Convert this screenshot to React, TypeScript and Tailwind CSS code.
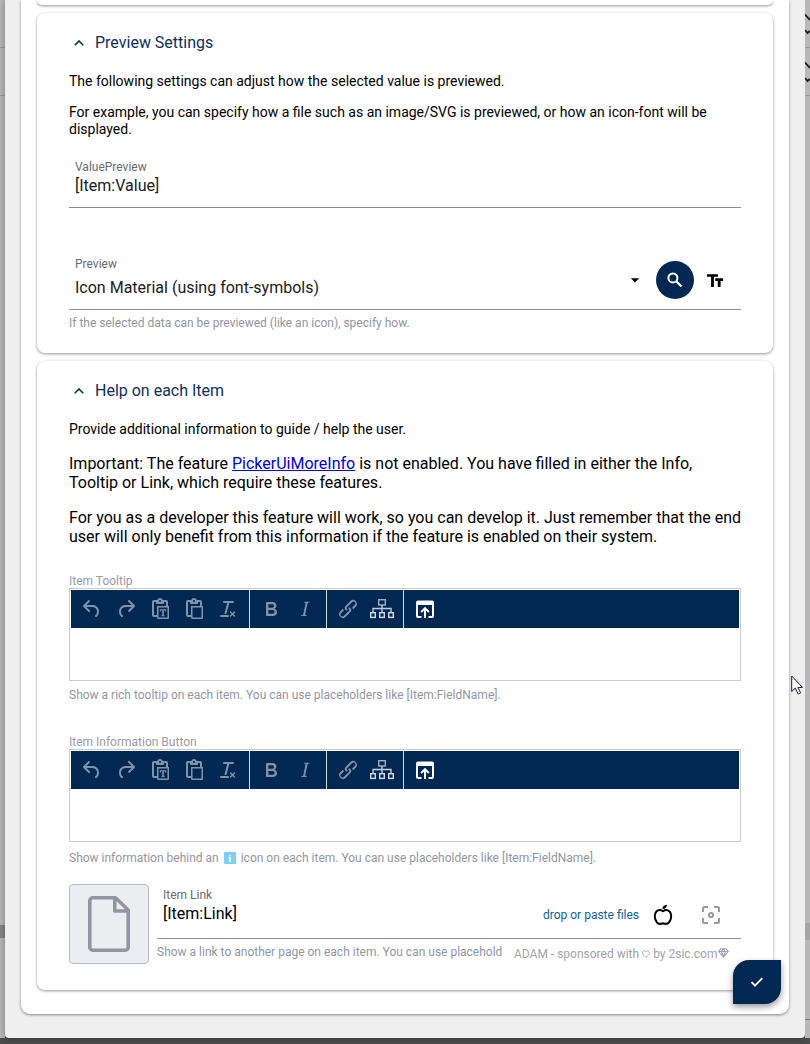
import type { ReactNode } from "react";
import { MdArrowDropDown } from "react-icons/md";

const PASTE =
  "M18 9V5h-2v1c0 .6-.4 1-1 1H9a1 1 0 0 1-1-1V5H6v13h3V9h9ZM9 20H6a2 2 0 0 1-2-2V5c0-1.1.9-2 2-2h3.2A3 3 0 0 1 12 1a3 3 0 0 1 2.8 2H18a2 2 0 0 1 2 2v4h1v12.1c0 .5-.4.9-.9.9h-10a.9.9 0 0 1-.9-.9L9 20Zm1.5-9.5v10h9v-10h-9ZM12 3a1 1 0 0 0-1 1c0 .5.4 1 1 1s1-.5 1-1-.4-1-1-1Z";

const ICONS = {
  undo: "M6.4 8H12c3.7 0 6.2 2 6.8 5.1.6 2.7-.4 5.6-2.3 6.8a1 1 0 0 1-1-1.8c1.1-.6 1.8-2.7 1.4-4.6-.5-2.1-2.1-3.5-4.9-3.5H6.4l3.3 3.3a1 1 0 1 1-1.4 1.4l-5-5a1 1 0 0 1 0-1.4l5-5a1 1 0 0 1 1.4 1.4L6.4 8Z",
  redo: "M17.6 10H12c-2.8 0-4.4 1.4-4.9 3.5-.4 2 .3 4 1.4 4.6a1 1 0 1 1-1 1.8c-2-1.2-2.9-4.1-2.3-6.8.6-3 3-5.1 6.8-5.1h5.6l-3.3-3.3a1 1 0 1 1 1.4-1.4l5 5a1 1 0 0 1 0 1.4l-5 5a1 1 0 0 1-1.4-1.4l3.3-3.3Z",
  pasteText: PASTE + "M11.8 12.2h6.4v2.2h-1l-.3-1.1h-1.1v5l1 .2v.8h-3.6v-.8l1-.2v-5h-1.1l-.3 1.1h-1v-2.2Z",
  paste: PASTE,
  clear: "M13.2 6a1 1 0 0 1 0 .2l-2.6 10a1 1 0 0 1-1 .8h-.2a.8.8 0 0 1-.8-1l2.6-10H8a1 1 0 1 1 0-2h9a1 1 0 0 1 0 2h-3.8ZM5 18h7a1 1 0 0 1 0 2H5a1 1 0 0 1 0-2Zm13 1.5L16.5 18 15 19.5a.7.7 0 0 1-1-1l1.5-1.5-1.5-1.5a.7.7 0 0 1 1-1l1.5 1.5 1.5-1.5a.7.7 0 0 1 1 1L17.5 17l1.5 1.5a.7.7 0 0 1-1 1Z",
  bold: "M7.8 19c-.3 0-.5 0-.6-.2l-.2-.5V5.7c0-.2 0-.4.2-.5l.6-.2h5c1.5 0 2.7.3 3.5 1 .7.6 1.1 1.4 1.1 2.5a3 3 0 0 1-.6 1.9c-.4.6-1 1-1.6 1.2.4.1.9.3 1.3.6s.8.7 1 1.2c.4.4.5 1 .5 1.6 0 1.3-.4 2.3-1.3 3-.8.7-2.1 1-3.8 1H7.8Zm5-8.3c.6 0 1.2-.1 1.6-.5.4-.3.6-.7.6-1.3 0-1.1-.8-1.7-2.3-1.7H9.3v3.5h3.4Zm.5 6c.7 0 1.3-.1 1.7-.4.4-.4.6-.9.6-1.5s-.2-1-.7-1.4c-.4-.3-1-.4-2-.4H9.4v3.8h4Z",
  italic: "m16.7 4.7-.1.9h-.3c-.6 0-1 0-1.4.3-.3.3-.4.6-.5 1.1l-2.1 9.8v.6c0 .5.4.8 1.4.8h.2l-.2.8H8l.2-.8h.2c1.1 0 1.8-.5 2-1.5l2-9.8.1-.5c0-.6-.4-.8-1.4-.8h-.3l.2-.9h5.8Z",
  link: "M6.2 12.3a1 1 0 0 1 1.4 1.4l-2 2a2 2 0 1 0 2.6 2.8l4.8-4.8a1 1 0 0 0 0-1.4 1 1 0 1 1 1.4-1.3 2.9 2.9 0 0 1 0 4L9.6 20a3.9 3.9 0 0 1-5.5-5.5l2-2Zm11.6-.6a1 1 0 0 1-1.4-1.4l2-2a2 2 0 1 0-2.6-2.8L11 10.3a1 1 0 0 0 0 1.4A1 1 0 1 1 9.6 13a2.9 2.9 0 0 1 0-4L14.4 4a3.9 3.9 0 0 1 5.5 5.5l-2 2Z",
};

function Tool({ name }: { name: keyof typeof ICONS }) {
  return (
    <button className="flex h-[38px] w-[34px] items-center justify-center text-[#8093a9]">
      <svg width="24" height="24" viewBox="0 0 24 24" fill="currentColor" fillRule="evenodd">
        <path d={ICONS[name]} />
      </svg>
    </button>
  );
}

function Group({ children }: { children: ReactNode }) {
  return <div className="box-content flex border-r border-[#d5dbe2] px-1">{children}</div>;
}

function Editor() {
  return (
    <div className="h-[93px] border border-[#cccccc] bg-white p-px">
      <div className="flex h-[38px] bg-[#002852]">
        <Group>
          <Tool name="undo" />
          <Tool name="redo" />
          <Tool name="pasteText" />
          <Tool name="paste" />
          <Tool name="clear" />
        </Group>
        <Group>
          <Tool name="bold" />
          <Tool name="italic" />
        </Group>
        <Group>
          <Tool name="link" />
          <button className="flex h-[38px] w-[34px] items-center justify-center">
            <svg width="24" height="22" viewBox="0 0 24 22" fill="none" strokeWidth="1.4">
              <g stroke="#9fafc0">
                <rect x="8.7" y="1.7" width="6.6" height="5.3" />
                <path d="M12 7v7M3 14v-3.5h18V14" stroke="#c3ccd6" />
              </g>
              <g stroke="#d3dae1">
                <rect x=".7" y="14.7" width="4.6" height="4.7" />
                <rect x="9.7" y="14.7" width="4.6" height="4.7" />
                <rect x="18.7" y="14.7" width="4.6" height="4.7" />
              </g>
            </svg>
          </button>
        </Group>
        <button className="ml-1 flex w-[34px] items-center justify-center text-white">
          <svg width="24" height="24" viewBox="0 0 24 24" fill="currentColor">
            <path d="M5 3.5h14a2 2 0 0 1 2 2V19a2 2 0 0 1-2 2h-3.5v-2H19V8H5v11h3.5v2H5a2 2 0 0 1-2-2V5.5a2 2 0 0 1 2-2Z" />
            <path d="M12 9.8l4.5 4.5-1.4 1.4-2.1-2.1V21h-2v-7.4l-2.1 2.1-1.4-1.4L12 9.8Z" />
          </svg>
        </button>
      </div>
    </div>
  );
}

function Title({ children }: { children: ReactNode }) {
  return (
    <h2 className="flex h-5 items-center pl-[5px] text-base text-[#0c305c]">
      <svg className="mr-[11px]" width="10" height="6" viewBox="0 0 10 6" fill="none" stroke="currentColor" strokeWidth="1.6">
        <path d="M.7 5.3 5 1l4.3 4.3" />
      </svg>
      {children}
    </h2>
  );
}

const CARD = "shrink-0 rounded-lg bg-white px-8 shadow-[0_1px_3px_rgba(0,0,0,0.42)]";

export default function App() {
  return (
    <div className="relative flex h-[1044px] w-[810px] flex-col overflow-hidden bg-[#4c4c4c] font-['Roboto',sans-serif] text-black">
      <div className="flex h-[1038px]">
        <div className="flex w-[5px] flex-col bg-[#b8b8b8]">
          <div className="h-12 border-b border-[#999]" />
          <div className="h-12 border-b border-[#999]" />
          <div className="mt-[829px] h-[13px] bg-[#858585]" />
        </div>
        <main className="w-[800px] rounded-b bg-[#efefef] px-4 shadow-[0_0_7px_rgba(0,0,0,0.35)]">
          <div className="flex h-[1014px] flex-col gap-2 rounded-b-[9px] bg-white px-4 shadow-[0_1px_3px_rgba(0,0,0,0.45)]">
            <div className="h-[5px] shrink-0 rounded-b-lg bg-white shadow-[0_1px_3px_rgba(0,0,0,0.42)]" />

            <section className={CARD + " h-[340px] pt-5"}>
              <Title>Preview Settings</Title>
              <p className="mt-5 text-sm leading-[17px]">
                The following settings can adjust how the selected value is previewed.
              </p>
              <p className="mt-[14px] text-sm leading-[17px]">
                For example, you can specify how a file such as an image/SVG is previewed, or how an icon-font will be
                displayed.
              </p>
              <div className="mt-[21px] h-[49px] border-b border-[#8c8c8c] px-1.5">
                <div className="text-xs leading-4 text-[#6b6b6b]">ValuePreview</div>
                <div className="text-base leading-[22px] text-[#202020]">[Item:Value]</div>
              </div>
              <div className="mt-[48px] flex h-[54px] items-start border-b border-[#8c8c8c] pl-1.5">
                <div className="flex-1">
                  <div className="text-xs leading-4 text-[#6b6b6b]">Preview</div>
                  <div className="mt-[5px] text-base leading-[22px] text-[#202020]">Icon Material (using font-symbols)</div>
                </div>
                <MdArrowDropDown size={20} className="mr-[11px] mt-[14px]" />
                <button className="mt-[5px] flex size-[38px] items-center justify-center rounded-full bg-[#002852] text-white">
                  <svg width="20" height="20" viewBox="0 0 24 24" fill="none" stroke="currentColor" strokeWidth="2.4">
                    <circle cx="9.5" cy="9.5" r="5.4" />
                    <path d="m13.800 13.800 6 6" strokeWidth="2.800" />
                  </svg>
                </button>
                <svg className="ml-[11px] mr-4 mt-[15px]" width="20" height="20" viewBox="0 0 24 24" fill="currentColor">
                  <path d="M2.300 3.800v3.200h5V19.300h3.400V7h5V3.800H2.300Zm19.400 5h-9.400v3.200h3v7.300h3.400V12h3V8.800Z" />
                </svg>
              </div>
              <p className="mt-[5px] text-xs leading-4 text-[#93969f]">
                If the selected data can be previewed (like an icon), specify how.
              </p>
            </section>

            <section className={CARD + " h-[629px] pt-5"}>
              <Title>Help on each Item</Title>
              <p className="mt-5 text-sm leading-[17px]">Provide additional information to guide / help the user.</p>
              <p className="mt-4 text-base leading-[19px]">
                Important: The feature <a className="text-[#0000ee] underline">PickerUiMoreInfo</a> is not enabled. You
                have filled in either the Info, Tooltip or Link, which require these features.
              </p>
              <p className="-mr-1 mt-4 text-base leading-[19px]">
                For you as a developer this feature will work, so you can develop it. Just remember that the end
                <br />
                user will only benefit from this information if the feature is enabled on their system.
              </p>
              <div className="mt-[28px] text-xs leading-[14px] text-[#999ca5]">Item Tooltip</div>
              <Editor />
              <p className="mt-1.5 text-xs leading-4 text-[#93969f]">
                Show a rich tooltip on each item. You can use placeholders like [Item:FieldName].
              </p>
              <div className="mt-[32px] text-xs leading-[14px] text-[#999ca5]">Item Information Button</div>
              <Editor />
              <p className="mt-2 flex items-center text-xs leading-4 text-[#93969f]">
                Show information behind an
                <span className="mx-[5px] flex h-3 w-3 items-center justify-center rounded-[1px] bg-[#7ccff5] font-['Liberation_Serif',serif] text-[11px] font-bold leading-3 text-white">
                  i
                </span>
                icon on each item. You can use placeholders like [Item:FieldName].
              </p>

              <div className="mt-[18px] flex gap-2">
                <div className="flex size-20 items-center justify-center rounded-[4px] border border-[#b9bbc0] bg-[#ecedf0]">
                  <svg width="42" height="56" viewBox="0 0 42 56" fill="none" stroke="#9296a3" strokeWidth="3.6" strokeLinejoin="round">
                    <path d="M5 1.8h22.5L40.2 14v37.2a3 3 0 0 1-3 3H4.8a3 3 0 0 1-3-3V4.8a3 3 0 0 1 3-3Z" />
                    <path d="M26.8 2v13h13.4" />
                  </svg>
                </div>
                <div className="w-[584px]">
                  <div className="flex h-[55px] border-b border-[#8c8c8c] pl-1.5">
                    <div className="w-[380px] pt-[3px]">
                      <div className="text-xs leading-4 text-[#6b6b6b]">Item Link</div>
                      <div className="text-base leading-[22px]">[Item:Link]</div>
                    </div>
                    <span className="pt-[23px] text-xs leading-4 text-[#0f5f9f]">drop or paste files</span>
                    <svg className="ml-[14px] mt-5" width="20" height="22" viewBox="0 0 20 22" fill="none" stroke="black" strokeWidth="2" strokeLinejoin="round">
                      <path d="M10 7.2C8 5.800 5.200 5.800 3.400 7.5C.800 10.200 1.500 15.200 3.900 18.300C5.500 20.400 7.500 20.200 10 19.300C12.500 20.200 14.500 20.400 16.100 18.300C18.500 15.200 19.200 10.200 16.600 7.500C14.800 5.800 12 5.800 10 7.200Z" />
                      <path d="M9.3 5C9.4 2.700 10.900.900 14 .700C13.900 3 12.200 4.900 9.300 5Z" fill="black" stroke="none" />
                    </svg>
                    <svg className="ml-[29px] mt-[22px]" width="18" height="18" viewBox="0 0 18 18" fill="none" stroke="#9a9a9a" strokeWidth="2">
                      <path d="M1 6V2.5A1.5 1.5 0 0 1 2.5 1H6M12 1h3.5A1.5 1.5 0 0 1 17 2.5V6M17 12v3.5a1.5 1.5 0 0 1-1.5 1.5H12M6 17H2.5A1.5 1.5 0 0 1 1 15.5V12" />
                      <circle cx="9" cy="9" r="2.1" strokeWidth="2" />
                    </svg>
                  </div>
                  <div className="flex items-start pt-[5px] text-xs leading-4 text-[#93969f]">
                    <span className="w-[346px] overflow-hidden whitespace-nowrap">
                      Show a link to another page on each item. You can use placehold
                    </span>
                    <span className="ml-[11px] mt-[2px] flex h-4 items-center text-[#a0a3aa]">
                      <span>ADAM - sponsored with</span>
                      <svg className="ml-[3px] mr-[3px]" width="8" height="8" viewBox="0 0 8 8" fill="none" stroke="currentColor" strokeWidth=".9">
                        <path d="M4 7.3C2.2 5.8.5 4.5.5 2.6c0-2.2 2.7-2.5 3.5-.7C4.8.1 7.5.4 7.5 2.6 7.5 4.5 5.8 5.8 4 7.3Z" />
                      </svg>
                      <span>by 2sic.com</span>
                      <svg className="-mt-[3px] ml-px" width="11" height="10" viewBox="0 0 11 10" fill="none" stroke="currentColor" strokeWidth="1.1">
                        <path d="M2.7.8h5.6l2 2.7-4.8 5.6L.7 3.5l2-2.7ZM.7 3.5h9.6M5.5.8l-2 2.7 2 5.6 2-5.6-2-2.7" />
                      </svg>
                    </span>
                  </div>
                </div>
              </div>
            </section>
          </div>
        </main>
        <div className="flex w-[5px] flex-col overflow-hidden bg-[#b8b8b8]">
          {[0, 1].map((row) => (
            <div key={row} className="h-12 border-b border-[#999]">
              <svg width="5" height="47" viewBox="0 0 5 47" fill="none" stroke="#151515" strokeWidth="1.7">
                <path d="M0 14.5 5 20M0 30l2.5 3L5 31" />
              </svg>
            </div>
          ))}
          <div className="mt-[827px] h-[17px] bg-[#a5a5a5]" />
          <div className="h-20 border-b border-[#777]" />
        </div>
      </div>

      <button className="absolute left-[733px] top-[960px] flex h-11 w-12 items-center justify-center rounded-br-[16px] rounded-tl-[16px] bg-[#002852] text-white shadow-[0_3px_6px_rgba(0,0,0,0.4)]">
        <svg width="16" height="16" viewBox="0 0 24 24" fill="none" stroke="currentColor" strokeWidth="2.800">
          <path d="m3.800 12.300 5.200 5.200L20 6.300" />
        </svg>
      </button>
      <svg className="absolute left-[791px] top-[675px]" width="13" height="21" viewBox="0 0 13 21" fill="white" stroke="#171b30" strokeWidth="1">
        <path d="M.7 1v15.5l3.6-3.4L7.1 19l2.5-1.2-2.8-5.4h4.7L.7 1Z" />
      </svg>
    </div>
  );
}
